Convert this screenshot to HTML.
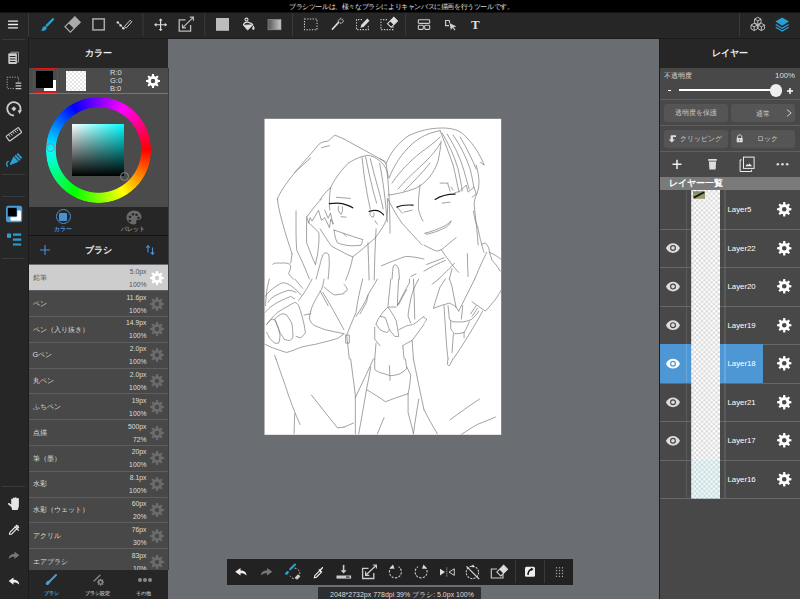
<!DOCTYPE html><html lang="ja"><head><meta charset="utf-8"><style>
*{margin:0;padding:0;box-sizing:border-box}
html,body{width:800px;height:599px;overflow:hidden;background:#6a6d71;font-family:"Liberation Sans",sans-serif;color:#fff}
.a{position:absolute}
.t{position:absolute;white-space:nowrap;line-height:1}
svg{overflow:visible}
</style></head><body>
<div class="a" style="left:0;top:0;width:800px;height:13px;background:#262626"></div><svg class="a" style="left:0;top:0" width="800" height="13"><rect x="0" y="0" width="800" height="12.5" fill="#000"/></svg>
<div class="t" style="left:289px;top:3.5px;font-size:6.5px;letter-spacing:-0.4px;color:#e0e0e0">ブラシツールは、様々なブラシによりキャンバスに描画を行うツールです。</div>
<div class="a" style="left:0;top:13px;width:800px;height:25px;background:#262626"></div>
<div class="a" style="left:0;top:38px;width:28px;height:561px;background:#262626"></div>
<div class="a" style="left:2px;top:39px;width:23px;height:1px;background:#3a3a3a"></div>
<div class="a" style="left:2px;top:174px;width:23px;height:1px;background:#3a3a3a"></div>
<div class="a" style="left:2px;top:196px;width:23px;height:1px;background:#3a3a3a"></div>
<div class="a" style="left:2px;top:258px;width:23px;height:1px;background:#3a3a3a"></div>
<div class="a" style="left:2px;top:486px;width:23px;height:1px;background:#3a3a3a"></div>
<div class="a" style="left:28px;top:38px;width:140px;height:30px;background:#262626"></div>
<div class="t" style="left:28px;width:140px;text-align:center;top:48.5px;font-size:9px;font-weight:bold;color:#eee">カラー</div>
<div class="a" style="left:28px;top:68px;width:140px;height:139px;background:#4b4b4b"></div>
<div class="a" style="left:28px;top:93px;width:140px;height:1px;background:#777"></div>
<div class="a" style="left:33px;top:68px;width:25px;height:25px;border:1.9px solid #e01818;border-radius:2.5px"></div>
<div class="a" style="left:44px;top:80px;width:12px;height:11px;background:#fff"></div>
<div class="a" style="left:36px;top:71px;width:17px;height:17px;background:#000"></div>
<div class="a" style="left:66px;top:71px;width:20px;height:20px;background-color:#fff;background-image:linear-gradient(45deg,#e4e4e4 25%,transparent 25%,transparent 75%,#e4e4e4 75%),linear-gradient(45deg,#e4e4e4 25%,transparent 25%,transparent 75%,#e4e4e4 75%);background-size:4px 4px;background-position:0 0,2px 2px"></div>
<div class="t" style="left:110px;top:69px;font-size:7.5px;color:#ddd">R:0</div>
<div class="t" style="left:110px;top:77px;font-size:7.5px;color:#ddd">G:0</div>
<div class="t" style="left:110px;top:85px;font-size:7.5px;color:#ddd">B:0</div>
<svg style="position:absolute;left:145.5px;top:73.5px" width="14" height="14"><path fill-rule="evenodd" fill="#fff" d="M11.90,5.82 L13.93,6.01 L13.93,7.99 L11.90,8.18 L11.30,9.63 L12.60,11.20 L11.20,12.60 L9.63,11.30 L8.18,11.90 L7.99,13.93 L6.01,13.93 L5.82,11.90 L4.37,11.30 L2.80,12.60 L1.40,11.20 L2.70,9.63 L2.10,8.18 L0.07,7.99 L0.07,6.01 L2.10,5.82 L2.70,4.37 L1.40,2.80 L2.80,1.40 L4.37,2.70 L5.82,2.10 L6.01,0.07 L7.99,0.07 L8.18,2.10 L9.63,2.70 L11.20,1.40 L12.60,2.80 L11.30,4.37Z M9.24,7.00 A2.24,2.24 0 1,0 4.76,7.00 A2.24,2.24 0 1,0 9.24,7.00Z"/></svg>
<div class="a" style="left:45.5px;top:97.2px;width:105.8px;height:105.8px;border-radius:50%;background:conic-gradient(from 90deg,#f00,#ff0,#0f0,#0ff,#00f,#f0f,#f00);-webkit-mask:radial-gradient(circle,transparent 42.3px,#000 43.2px);mask:radial-gradient(circle,transparent 42.3px,#000 43.2px)"></div>
<div class="a" style="left:72px;top:124px;width:52px;height:52px;background:linear-gradient(to bottom,transparent,#000),linear-gradient(to right,#fff,#0ff)"></div>
<div class="a" style="left:46.3px;top:143.4px;width:9px;height:9px;border-radius:50%;border:1.8px solid #8a8a8a"></div>
<div class="a" style="left:120px;top:172.3px;width:9px;height:9px;border-radius:50%;border:1.8px solid #8a8a8a"></div>
<div class="a" style="left:28px;top:207px;width:140px;height:28px;background:#262626"></div>
<div class="a" style="left:28px;top:235px;width:140px;height:1px;background:#141414"></div>
<div class="a" style="left:55.5px;top:209px;width:15px;height:15px;border-radius:50%;border:1.3px solid #4a90d0"></div>
<div class="a" style="left:59px;top:212.5px;width:8px;height:8px;background:#4a90d0;border-radius:1px"></div>
<div class="t" style="left:48px;width:30px;text-align:center;top:227px;font-size:5.8px;font-weight:bold;color:#4a90d0">カラー</div>
<div class="t" style="left:113px;width:40px;text-align:center;top:227px;font-size:5.6px;font-weight:bold;color:#888">パレット</div>
<svg class="a" style="left:125.5px;top:209.5px" width="16" height="15"><path fill="#6a6a6a" fill-rule="evenodd" d="M8,0.5 C12.5,0.5 15.5,3.5 15.5,7 C15.5,9.5 13.5,10 12,9.8 C10.5,9.6 9.8,10.6 10.3,12 C10.8,13.5 9.8,14.5 8,14.5 C4,14.5 0.5,11.5 0.5,7.5 C0.5,3.5 3.8,0.5 8,0.5Z M4,5.5a1.3,1.3 0 1,0 0.01,0Z M7,3a1.3,1.3 0 1,0 0.01,0Z M10.5,3.5a1.3,1.3 0 1,0 0.01,0Z M12.5,6.5a1.3,1.3 0 1,0 0.01,0Z M3.8,9.5a1.3,1.3 0 1,0 0.01,0Z"/></svg>
<div class="a" style="left:28px;top:236px;width:140px;height:28px;background:#262626"></div>
<div class="t" style="left:28px;width:140px;text-align:center;top:246px;font-size:9px;font-weight:bold;color:#eee">ブラシ</div>
<svg class="a" style="left:40px;top:245px" width="10" height="10"><path stroke="#4a90d0" stroke-width="1.1" d="M5,0V10M0,5H10"/></svg>
<svg class="a" style="left:145.5px;top:244.5px" width="9" height="10"><path stroke="#4a90d0" stroke-width="1.1" fill="none" d="M2,7.5V0.8M0.3,2.6L2,0.5L3.7,2.6M6.5,2.5V9.2M4.8,7.4L6.5,9.5L8.2,7.4"/></svg>
<div class="a" style="left:28px;top:264.8px;width:140px;height:25.8px;background:#cdcdcd"></div>
<div class="t" style="left:32.5px;top:274.0px;font-size:7.3px;color:#555">鉛筆</div>
<div class="t" style="left:100px;width:46.5px;text-align:right;top:268.8px;font-size:6.8px;color:#555">5.0px</div>
<div class="t" style="left:100px;width:46.5px;text-align:right;top:281.8px;font-size:6.8px;color:#555">100%</div>
<svg style="position:absolute;left:149.8px;top:270.8px" width="14" height="14"><path fill-rule="evenodd" fill="#fff" d="M11.90,5.82 L13.93,6.01 L13.93,7.99 L11.90,8.18 L11.30,9.63 L12.60,11.20 L11.20,12.60 L9.63,11.30 L8.18,11.90 L7.99,13.93 L6.01,13.93 L5.82,11.90 L4.37,11.30 L2.80,12.60 L1.40,11.20 L2.70,9.63 L2.10,8.18 L0.07,7.99 L0.07,6.01 L2.10,5.82 L2.70,4.37 L1.40,2.80 L2.80,1.40 L4.37,2.70 L5.82,2.10 L6.01,0.07 L7.99,0.07 L8.18,2.10 L9.63,2.70 L11.20,1.40 L12.60,2.80 L11.30,4.37Z M9.24,7.00 A2.24,2.24 0 1,0 4.76,7.00 A2.24,2.24 0 1,0 9.24,7.00Z"/></svg>
<div class="a" style="left:28px;top:290.6px;width:140px;height:25.8px;background:#484848"></div>
<div class="a" style="left:28px;top:290.1px;width:140px;height:1px;background:#5e5e5e"></div>
<div class="t" style="left:32.5px;top:299.8px;font-size:7.3px;color:#ddd">ペン</div>
<div class="t" style="left:100px;width:46.5px;text-align:right;top:294.6px;font-size:6.8px;color:#ddd">11.6px</div>
<div class="t" style="left:100px;width:46.5px;text-align:right;top:307.6px;font-size:6.8px;color:#ddd">100%</div>
<svg style="position:absolute;left:149.8px;top:296.6px" width="14" height="14"><path fill-rule="evenodd" fill="#6b6b6b" d="M11.90,5.82 L13.93,6.01 L13.93,7.99 L11.90,8.18 L11.30,9.63 L12.60,11.20 L11.20,12.60 L9.63,11.30 L8.18,11.90 L7.99,13.93 L6.01,13.93 L5.82,11.90 L4.37,11.30 L2.80,12.60 L1.40,11.20 L2.70,9.63 L2.10,8.18 L0.07,7.99 L0.07,6.01 L2.10,5.82 L2.70,4.37 L1.40,2.80 L2.80,1.40 L4.37,2.70 L5.82,2.10 L6.01,0.07 L7.99,0.07 L8.18,2.10 L9.63,2.70 L11.20,1.40 L12.60,2.80 L11.30,4.37Z M9.24,7.00 A2.24,2.24 0 1,0 4.76,7.00 A2.24,2.24 0 1,0 9.24,7.00Z"/></svg>
<div class="a" style="left:28px;top:316.4px;width:140px;height:25.8px;background:#484848"></div>
<div class="a" style="left:28px;top:315.9px;width:140px;height:1px;background:#5e5e5e"></div>
<div class="t" style="left:32.5px;top:325.6px;font-size:7.3px;color:#ddd">ペン（入り抜き）</div>
<div class="t" style="left:100px;width:46.5px;text-align:right;top:320.4px;font-size:6.8px;color:#ddd">14.9px</div>
<div class="t" style="left:100px;width:46.5px;text-align:right;top:333.4px;font-size:6.8px;color:#ddd">100%</div>
<svg style="position:absolute;left:149.8px;top:322.40000000000003px" width="14" height="14"><path fill-rule="evenodd" fill="#6b6b6b" d="M11.90,5.82 L13.93,6.01 L13.93,7.99 L11.90,8.18 L11.30,9.63 L12.60,11.20 L11.20,12.60 L9.63,11.30 L8.18,11.90 L7.99,13.93 L6.01,13.93 L5.82,11.90 L4.37,11.30 L2.80,12.60 L1.40,11.20 L2.70,9.63 L2.10,8.18 L0.07,7.99 L0.07,6.01 L2.10,5.82 L2.70,4.37 L1.40,2.80 L2.80,1.40 L4.37,2.70 L5.82,2.10 L6.01,0.07 L7.99,0.07 L8.18,2.10 L9.63,2.70 L11.20,1.40 L12.60,2.80 L11.30,4.37Z M9.24,7.00 A2.24,2.24 0 1,0 4.76,7.00 A2.24,2.24 0 1,0 9.24,7.00Z"/></svg>
<div class="a" style="left:28px;top:342.2px;width:140px;height:25.8px;background:#484848"></div>
<div class="a" style="left:28px;top:341.7px;width:140px;height:1px;background:#5e5e5e"></div>
<div class="t" style="left:32.5px;top:351.4px;font-size:7.3px;color:#ddd">Gペン</div>
<div class="t" style="left:100px;width:46.5px;text-align:right;top:346.2px;font-size:6.8px;color:#ddd">2.0px</div>
<div class="t" style="left:100px;width:46.5px;text-align:right;top:359.2px;font-size:6.8px;color:#ddd">100%</div>
<svg style="position:absolute;left:149.8px;top:348.20000000000005px" width="14" height="14"><path fill-rule="evenodd" fill="#6b6b6b" d="M11.90,5.82 L13.93,6.01 L13.93,7.99 L11.90,8.18 L11.30,9.63 L12.60,11.20 L11.20,12.60 L9.63,11.30 L8.18,11.90 L7.99,13.93 L6.01,13.93 L5.82,11.90 L4.37,11.30 L2.80,12.60 L1.40,11.20 L2.70,9.63 L2.10,8.18 L0.07,7.99 L0.07,6.01 L2.10,5.82 L2.70,4.37 L1.40,2.80 L2.80,1.40 L4.37,2.70 L5.82,2.10 L6.01,0.07 L7.99,0.07 L8.18,2.10 L9.63,2.70 L11.20,1.40 L12.60,2.80 L11.30,4.37Z M9.24,7.00 A2.24,2.24 0 1,0 4.76,7.00 A2.24,2.24 0 1,0 9.24,7.00Z"/></svg>
<div class="a" style="left:28px;top:368.0px;width:140px;height:25.8px;background:#484848"></div>
<div class="a" style="left:28px;top:367.5px;width:140px;height:1px;background:#5e5e5e"></div>
<div class="t" style="left:32.5px;top:377.2px;font-size:7.3px;color:#ddd">丸ペン</div>
<div class="t" style="left:100px;width:46.5px;text-align:right;top:372.0px;font-size:6.8px;color:#ddd">2.0px</div>
<div class="t" style="left:100px;width:46.5px;text-align:right;top:385.0px;font-size:6.8px;color:#ddd">100%</div>
<svg style="position:absolute;left:149.8px;top:374.0px" width="14" height="14"><path fill-rule="evenodd" fill="#6b6b6b" d="M11.90,5.82 L13.93,6.01 L13.93,7.99 L11.90,8.18 L11.30,9.63 L12.60,11.20 L11.20,12.60 L9.63,11.30 L8.18,11.90 L7.99,13.93 L6.01,13.93 L5.82,11.90 L4.37,11.30 L2.80,12.60 L1.40,11.20 L2.70,9.63 L2.10,8.18 L0.07,7.99 L0.07,6.01 L2.10,5.82 L2.70,4.37 L1.40,2.80 L2.80,1.40 L4.37,2.70 L5.82,2.10 L6.01,0.07 L7.99,0.07 L8.18,2.10 L9.63,2.70 L11.20,1.40 L12.60,2.80 L11.30,4.37Z M9.24,7.00 A2.24,2.24 0 1,0 4.76,7.00 A2.24,2.24 0 1,0 9.24,7.00Z"/></svg>
<div class="a" style="left:28px;top:393.8px;width:140px;height:25.8px;background:#484848"></div>
<div class="a" style="left:28px;top:393.3px;width:140px;height:1px;background:#5e5e5e"></div>
<div class="t" style="left:32.5px;top:403.0px;font-size:7.3px;color:#ddd">ふちペン</div>
<div class="t" style="left:100px;width:46.5px;text-align:right;top:397.8px;font-size:6.8px;color:#ddd">19px</div>
<div class="t" style="left:100px;width:46.5px;text-align:right;top:410.8px;font-size:6.8px;color:#ddd">100%</div>
<svg style="position:absolute;left:149.8px;top:399.8px" width="14" height="14"><path fill-rule="evenodd" fill="#6b6b6b" d="M11.90,5.82 L13.93,6.01 L13.93,7.99 L11.90,8.18 L11.30,9.63 L12.60,11.20 L11.20,12.60 L9.63,11.30 L8.18,11.90 L7.99,13.93 L6.01,13.93 L5.82,11.90 L4.37,11.30 L2.80,12.60 L1.40,11.20 L2.70,9.63 L2.10,8.18 L0.07,7.99 L0.07,6.01 L2.10,5.82 L2.70,4.37 L1.40,2.80 L2.80,1.40 L4.37,2.70 L5.82,2.10 L6.01,0.07 L7.99,0.07 L8.18,2.10 L9.63,2.70 L11.20,1.40 L12.60,2.80 L11.30,4.37Z M9.24,7.00 A2.24,2.24 0 1,0 4.76,7.00 A2.24,2.24 0 1,0 9.24,7.00Z"/></svg>
<div class="a" style="left:28px;top:419.6px;width:140px;height:25.8px;background:#484848"></div>
<div class="a" style="left:28px;top:419.1px;width:140px;height:1px;background:#5e5e5e"></div>
<div class="t" style="left:32.5px;top:428.8px;font-size:7.3px;color:#ddd">点描</div>
<div class="t" style="left:100px;width:46.5px;text-align:right;top:423.6px;font-size:6.8px;color:#ddd">500px</div>
<div class="t" style="left:100px;width:46.5px;text-align:right;top:436.6px;font-size:6.8px;color:#ddd">72%</div>
<svg style="position:absolute;left:149.8px;top:425.6px" width="14" height="14"><path fill-rule="evenodd" fill="#6b6b6b" d="M11.90,5.82 L13.93,6.01 L13.93,7.99 L11.90,8.18 L11.30,9.63 L12.60,11.20 L11.20,12.60 L9.63,11.30 L8.18,11.90 L7.99,13.93 L6.01,13.93 L5.82,11.90 L4.37,11.30 L2.80,12.60 L1.40,11.20 L2.70,9.63 L2.10,8.18 L0.07,7.99 L0.07,6.01 L2.10,5.82 L2.70,4.37 L1.40,2.80 L2.80,1.40 L4.37,2.70 L5.82,2.10 L6.01,0.07 L7.99,0.07 L8.18,2.10 L9.63,2.70 L11.20,1.40 L12.60,2.80 L11.30,4.37Z M9.24,7.00 A2.24,2.24 0 1,0 4.76,7.00 A2.24,2.24 0 1,0 9.24,7.00Z"/></svg>
<div class="a" style="left:28px;top:445.4px;width:140px;height:25.8px;background:#484848"></div>
<div class="a" style="left:28px;top:444.9px;width:140px;height:1px;background:#5e5e5e"></div>
<div class="t" style="left:32.5px;top:454.6px;font-size:7.3px;color:#ddd">筆（墨）</div>
<div class="t" style="left:100px;width:46.5px;text-align:right;top:449.4px;font-size:6.8px;color:#ddd">20px</div>
<div class="t" style="left:100px;width:46.5px;text-align:right;top:462.4px;font-size:6.8px;color:#ddd">100%</div>
<svg style="position:absolute;left:149.8px;top:451.4px" width="14" height="14"><path fill-rule="evenodd" fill="#6b6b6b" d="M11.90,5.82 L13.93,6.01 L13.93,7.99 L11.90,8.18 L11.30,9.63 L12.60,11.20 L11.20,12.60 L9.63,11.30 L8.18,11.90 L7.99,13.93 L6.01,13.93 L5.82,11.90 L4.37,11.30 L2.80,12.60 L1.40,11.20 L2.70,9.63 L2.10,8.18 L0.07,7.99 L0.07,6.01 L2.10,5.82 L2.70,4.37 L1.40,2.80 L2.80,1.40 L4.37,2.70 L5.82,2.10 L6.01,0.07 L7.99,0.07 L8.18,2.10 L9.63,2.70 L11.20,1.40 L12.60,2.80 L11.30,4.37Z M9.24,7.00 A2.24,2.24 0 1,0 4.76,7.00 A2.24,2.24 0 1,0 9.24,7.00Z"/></svg>
<div class="a" style="left:28px;top:471.2px;width:140px;height:25.8px;background:#484848"></div>
<div class="a" style="left:28px;top:470.7px;width:140px;height:1px;background:#5e5e5e"></div>
<div class="t" style="left:32.5px;top:480.4px;font-size:7.3px;color:#ddd">水彩</div>
<div class="t" style="left:100px;width:46.5px;text-align:right;top:475.2px;font-size:6.8px;color:#ddd">8.1px</div>
<div class="t" style="left:100px;width:46.5px;text-align:right;top:488.2px;font-size:6.8px;color:#ddd">100%</div>
<svg style="position:absolute;left:149.8px;top:477.20000000000005px" width="14" height="14"><path fill-rule="evenodd" fill="#6b6b6b" d="M11.90,5.82 L13.93,6.01 L13.93,7.99 L11.90,8.18 L11.30,9.63 L12.60,11.20 L11.20,12.60 L9.63,11.30 L8.18,11.90 L7.99,13.93 L6.01,13.93 L5.82,11.90 L4.37,11.30 L2.80,12.60 L1.40,11.20 L2.70,9.63 L2.10,8.18 L0.07,7.99 L0.07,6.01 L2.10,5.82 L2.70,4.37 L1.40,2.80 L2.80,1.40 L4.37,2.70 L5.82,2.10 L6.01,0.07 L7.99,0.07 L8.18,2.10 L9.63,2.70 L11.20,1.40 L12.60,2.80 L11.30,4.37Z M9.24,7.00 A2.24,2.24 0 1,0 4.76,7.00 A2.24,2.24 0 1,0 9.24,7.00Z"/></svg>
<div class="a" style="left:28px;top:497.0px;width:140px;height:25.8px;background:#484848"></div>
<div class="a" style="left:28px;top:496.5px;width:140px;height:1px;background:#5e5e5e"></div>
<div class="t" style="left:32.5px;top:506.2px;font-size:7.3px;color:#ddd">水彩（ウェット）</div>
<div class="t" style="left:100px;width:46.5px;text-align:right;top:501.0px;font-size:6.8px;color:#ddd">60px</div>
<div class="t" style="left:100px;width:46.5px;text-align:right;top:514.0px;font-size:6.8px;color:#ddd">20%</div>
<svg style="position:absolute;left:149.8px;top:503.0px" width="14" height="14"><path fill-rule="evenodd" fill="#6b6b6b" d="M11.90,5.82 L13.93,6.01 L13.93,7.99 L11.90,8.18 L11.30,9.63 L12.60,11.20 L11.20,12.60 L9.63,11.30 L8.18,11.90 L7.99,13.93 L6.01,13.93 L5.82,11.90 L4.37,11.30 L2.80,12.60 L1.40,11.20 L2.70,9.63 L2.10,8.18 L0.07,7.99 L0.07,6.01 L2.10,5.82 L2.70,4.37 L1.40,2.80 L2.80,1.40 L4.37,2.70 L5.82,2.10 L6.01,0.07 L7.99,0.07 L8.18,2.10 L9.63,2.70 L11.20,1.40 L12.60,2.80 L11.30,4.37Z M9.24,7.00 A2.24,2.24 0 1,0 4.76,7.00 A2.24,2.24 0 1,0 9.24,7.00Z"/></svg>
<div class="a" style="left:28px;top:522.8px;width:140px;height:25.8px;background:#484848"></div>
<div class="a" style="left:28px;top:522.3px;width:140px;height:1px;background:#5e5e5e"></div>
<div class="t" style="left:32.5px;top:532.0px;font-size:7.3px;color:#ddd">アクリル</div>
<div class="t" style="left:100px;width:46.5px;text-align:right;top:526.8px;font-size:6.8px;color:#ddd">76px</div>
<div class="t" style="left:100px;width:46.5px;text-align:right;top:539.8px;font-size:6.8px;color:#ddd">30%</div>
<svg style="position:absolute;left:149.8px;top:528.8px" width="14" height="14"><path fill-rule="evenodd" fill="#6b6b6b" d="M11.90,5.82 L13.93,6.01 L13.93,7.99 L11.90,8.18 L11.30,9.63 L12.60,11.20 L11.20,12.60 L9.63,11.30 L8.18,11.90 L7.99,13.93 L6.01,13.93 L5.82,11.90 L4.37,11.30 L2.80,12.60 L1.40,11.20 L2.70,9.63 L2.10,8.18 L0.07,7.99 L0.07,6.01 L2.10,5.82 L2.70,4.37 L1.40,2.80 L2.80,1.40 L4.37,2.70 L5.82,2.10 L6.01,0.07 L7.99,0.07 L8.18,2.10 L9.63,2.70 L11.20,1.40 L12.60,2.80 L11.30,4.37Z M9.24,7.00 A2.24,2.24 0 1,0 4.76,7.00 A2.24,2.24 0 1,0 9.24,7.00Z"/></svg>
<div class="a" style="left:28px;top:548.6px;width:140px;height:25.8px;background:#484848"></div>
<div class="a" style="left:28px;top:548.1px;width:140px;height:1px;background:#5e5e5e"></div>
<div class="t" style="left:32.5px;top:557.8px;font-size:7.3px;color:#ddd">エアブラシ</div>
<div class="t" style="left:100px;width:46.5px;text-align:right;top:552.6px;font-size:6.8px;color:#ddd">83px</div>
<div class="t" style="left:100px;width:46.5px;text-align:right;top:565.6px;font-size:6.8px;color:#ddd">10%</div>
<svg style="position:absolute;left:149.8px;top:554.6px" width="14" height="14"><path fill-rule="evenodd" fill="#6b6b6b" d="M11.90,5.82 L13.93,6.01 L13.93,7.99 L11.90,8.18 L11.30,9.63 L12.60,11.20 L11.20,12.60 L9.63,11.30 L8.18,11.90 L7.99,13.93 L6.01,13.93 L5.82,11.90 L4.37,11.30 L2.80,12.60 L1.40,11.20 L2.70,9.63 L2.10,8.18 L0.07,7.99 L0.07,6.01 L2.10,5.82 L2.70,4.37 L1.40,2.80 L2.80,1.40 L4.37,2.70 L5.82,2.10 L6.01,0.07 L7.99,0.07 L8.18,2.10 L9.63,2.70 L11.20,1.40 L12.60,2.80 L11.30,4.37Z M9.24,7.00 A2.24,2.24 0 1,0 4.76,7.00 A2.24,2.24 0 1,0 9.24,7.00Z"/></svg>
<div class="a" style="left:28px;top:569.7px;width:140px;height:29.3px;background:#262626"></div>
<div class="t" style="left:28px;width:31px;text-align:right;top:590.8px;font-size:5.4px;font-weight:bold;color:#4a9ad8">ブラシ</div>
<div class="t" style="left:84.6px;top:590.8px;font-size:5.4px;font-weight:bold;color:#aaa">ブラシ設定</div>
<div class="t" style="left:136.3px;top:590.8px;font-size:5.4px;font-weight:bold;color:#aaa">その他</div>
<svg class="a" style="left:0;top:0" width="800" height="599"><path d="M56,575L49.8,581.2" stroke="#4a9ad8" stroke-width="2" stroke-linecap="round"/><ellipse cx="48" cy="582.8" rx="2.6" ry="1.7" transform="rotate(-45 48 582.8)" fill="#4a9ad8"/><path d="M100,575.2L94,581" stroke="#888" stroke-width="1.3" stroke-linecap="round"/><path fill-rule="evenodd" fill="#888" d="M103.23,581.57 L104.16,581.69 L104.16,582.71 L103.23,582.83 L102.90,583.61 L103.48,584.36 L102.76,585.08 L102.01,584.50 L101.23,584.83 L101.11,585.76 L100.09,585.76 L99.97,584.83 L99.19,584.50 L98.44,585.08 L97.72,584.36 L98.30,583.61 L97.97,582.83 L97.04,582.71 L97.04,581.69 L97.97,581.57 L98.30,580.79 L97.72,580.04 L98.44,579.32 L99.19,579.90 L99.97,579.57 L100.09,578.64 L101.11,578.64 L101.23,579.57 L102.01,579.90 L102.76,579.32 L103.48,580.04 L102.90,580.79Z M101.80,582.20 A1.2,1.2 0 1,0 99.40,582.20 A1.2,1.2 0 1,0 101.80,582.20Z"/><circle cx="140" cy="579.9" r="2" fill="#888"/><circle cx="145" cy="579.9" r="2" fill="#888"/><circle cx="150" cy="579.9" r="2" fill="#888"/></svg>
<div class="a" style="left:660px;top:38px;width:140px;height:561px;background:#484848"></div>
<div class="a" style="left:660px;top:38px;width:140px;height:30px;background:#262626"></div>
<div class="t" style="left:660px;width:140px;text-align:center;top:48.5px;font-size:9px;font-weight:bold;color:#eee">レイヤー</div>
<div class="t" style="left:664.4px;top:72.5px;font-size:6.9px;color:#ddd">不透明度</div>
<div class="t" style="left:745px;width:50px;text-align:right;top:72px;font-size:7.8px;color:#ddd">100%</div>
<div class="a" style="left:668px;top:90px;width:3px;height:1.3px;background:#fff"></div>
<div class="a" style="left:679px;top:89.3px;width:97px;height:1.7px;background:#fff"></div>
<div class="a" style="left:769.9px;top:84.4px;width:12.2px;height:12.2px;border-radius:50%;background:#eceeef"></div>
<svg class="a" style="left:787.4px;top:87.9px" width="6" height="6"><path stroke="#fff" stroke-width="1.5" d="M3,0V6M0,3H6"/></svg>
<div class="a" style="left:660px;top:99px;width:140px;height:1px;background:#5f5f5f"></div>
<div class="a" style="left:660px;top:125px;width:140px;height:1px;background:#5f5f5f"></div>
<div class="a" style="left:660px;top:151px;width:140px;height:1px;background:#5f5f5f"></div>
<div class="a" style="left:664px;top:104px;width:64.4px;height:17.5px;background:#555;border-radius:3px"></div>
<div class="a" style="left:731px;top:104px;width:64.4px;height:17.5px;background:#555;border-radius:3px"></div>
<div class="a" style="left:664px;top:130px;width:64.4px;height:17.5px;background:#555;border-radius:3px"></div>
<div class="a" style="left:731px;top:130px;width:64.4px;height:17.5px;background:#555;border-radius:3px"></div>
<div class="t" style="left:664px;width:64.5px;text-align:center;top:109.5px;font-size:6.9px;color:#ccc">透明度を保護</div>
<div class="t" style="left:755.5px;top:109.5px;font-size:7px;color:#ccc">通常</div>
<div class="t" style="left:679.5px;top:135.5px;font-size:6.9px;color:#ccc">クリッピング</div>
<div class="t" style="left:757px;top:135.5px;font-size:6.9px;color:#ccc">ロック</div>
<svg class="a" style="left:0;top:0" width="800" height="599"><path d="M786.9,109.6L791.2,113L786.9,116.4" fill="none" stroke="#ccc" stroke-width="1"/><path d="M671.2,135.3H676V137H673V139.5H675L671.8,142.6L668.6,139.5H670.6V136Z" fill="#ddd"/><path d="M737.6,138.2V136.8C737.6,134.2 741.8,134.2 741.8,136.8V138.2" fill="none" stroke="#ddd" stroke-width="1"/><rect x="736.7" y="138" width="6" height="4.3" fill="#ddd"/><rect x="739.4" y="139.3" width="0.7" height="1.6" fill="#555"/><path d="M677,159.8V168.9M672.5,164.35H681.5" stroke="#eee" stroke-width="1.5"/><rect x="708.1" y="159.1" width="8.8" height="1.6" rx="0.5" fill="#ddd"/><path d="M708.9,161.4H716.1L715.6,169.6H709.4Z" fill="#ddd"/><path d="M741.8,159.9H740.1V171.5H751.6V169.7" fill="none" stroke="#eee" stroke-width="1"/><rect x="743.5" y="157.1" width="10.6" height="11.3" fill="none" stroke="#eee" stroke-width="1"/><path d="M745.3,166.3L747.2,164L748.2,165L749.5,163.5L752.2,166.3Z" fill="#eee"/><circle cx="777.8" cy="164.35" r="1.25" fill="#ddd"/><circle cx="782.5" cy="164.35" r="1.25" fill="#ddd"/><circle cx="787.2" cy="164.35" r="1.25" fill="#ddd"/></svg>
<div class="a" style="left:660px;top:177.3px;width:140px;height:12.7px;background:#7a7a7a"></div>
<div class="t" style="left:669px;top:178.5px;font-size:9.3px;font-weight:bold;color:#fff">レイヤー一覧</div>
<div class="a" style="left:685.5px;top:190px;width:1.5px;height:308.5px;background:#5a5a5a"></div>
<div class="a" style="left:724px;top:190px;width:1.5px;height:308.5px;background:#5a5a5a"></div>
<div class="a" style="left:660px;top:228.5px;width:140px;height:1px;background:#686868"></div>
<div class="t" style="left:727.5px;top:206.0px;font-size:7.8px;color:#fff">Layer5</div>
<svg style="position:absolute;left:776.85px;top:202.05px" width="14.5" height="14.5"><path fill-rule="evenodd" fill="#fff" d="M12.33,6.03 L14.43,6.23 L14.43,8.27 L12.33,8.47 L11.70,9.98 L13.05,11.60 L11.60,13.05 L9.98,11.70 L8.47,12.33 L8.27,14.43 L6.23,14.43 L6.03,12.33 L4.52,11.70 L2.90,13.05 L1.45,11.60 L2.80,9.98 L2.17,8.47 L0.07,8.27 L0.07,6.23 L2.17,6.03 L2.80,4.52 L1.45,2.90 L2.90,1.45 L4.52,2.80 L6.03,2.17 L6.23,0.07 L8.27,0.07 L8.47,2.17 L9.98,2.80 L11.60,1.45 L13.05,2.90 L11.70,4.52Z M9.57,7.25 A2.32,2.32 0 1,0 4.93,7.25 A2.32,2.32 0 1,0 9.57,7.25Z"/></svg>
<div class="a" style="left:660px;top:267.1px;width:140px;height:1px;background:#686868"></div>
<div class="t" style="left:727.5px;top:244.6px;font-size:7.8px;color:#fff">Layer22</div>
<svg style="position:absolute;left:776.85px;top:240.60000000000002px" width="14.5" height="14.5"><path fill-rule="evenodd" fill="#fff" d="M12.33,6.03 L14.43,6.23 L14.43,8.27 L12.33,8.47 L11.70,9.98 L13.05,11.60 L11.60,13.05 L9.98,11.70 L8.47,12.33 L8.27,14.43 L6.23,14.43 L6.03,12.33 L4.52,11.70 L2.90,13.05 L1.45,11.60 L2.80,9.98 L2.17,8.47 L0.07,8.27 L0.07,6.23 L2.17,6.03 L2.80,4.52 L1.45,2.90 L2.90,1.45 L4.52,2.80 L6.03,2.17 L6.23,0.07 L8.27,0.07 L8.47,2.17 L9.98,2.80 L11.60,1.45 L13.05,2.90 L11.70,4.52Z M9.57,7.25 A2.32,2.32 0 1,0 4.93,7.25 A2.32,2.32 0 1,0 9.57,7.25Z"/></svg>
<svg class="a" style="left:0;top:0" width="800" height="599"><path d="M665.9,248.05 C669,241.55 677,241.55 680,248.05 C677,254.55 669,254.55 665.9,248.05Z" fill="#ddd"/><circle cx="673" cy="248.05" r="3" fill="#484848"/><circle cx="673" cy="248.05" r="1.8" fill="#ddd"/></svg>
<div class="a" style="left:660px;top:305.6px;width:140px;height:1px;background:#686868"></div>
<div class="t" style="left:727.5px;top:283.1px;font-size:7.8px;color:#fff">Layer20</div>
<svg style="position:absolute;left:776.85px;top:279.15000000000003px" width="14.5" height="14.5"><path fill-rule="evenodd" fill="#fff" d="M12.33,6.03 L14.43,6.23 L14.43,8.27 L12.33,8.47 L11.70,9.98 L13.05,11.60 L11.60,13.05 L9.98,11.70 L8.47,12.33 L8.27,14.43 L6.23,14.43 L6.03,12.33 L4.52,11.70 L2.90,13.05 L1.45,11.60 L2.80,9.98 L2.17,8.47 L0.07,8.27 L0.07,6.23 L2.17,6.03 L2.80,4.52 L1.45,2.90 L2.90,1.45 L4.52,2.80 L6.03,2.17 L6.23,0.07 L8.27,0.07 L8.47,2.17 L9.98,2.80 L11.60,1.45 L13.05,2.90 L11.70,4.52Z M9.57,7.25 A2.32,2.32 0 1,0 4.93,7.25 A2.32,2.32 0 1,0 9.57,7.25Z"/></svg>
<svg class="a" style="left:0;top:0" width="800" height="599"><path d="M665.9,286.60 C669,280.10 677,280.10 680,286.60 C677,293.10 669,293.10 665.9,286.60Z" fill="#ddd"/><circle cx="673" cy="286.60" r="3" fill="#484848"/><circle cx="673" cy="286.60" r="1.8" fill="#ddd"/></svg>
<div class="a" style="left:660px;top:344.1px;width:140px;height:1px;background:#686868"></div>
<div class="t" style="left:727.5px;top:321.6px;font-size:7.8px;color:#fff">Layer19</div>
<svg style="position:absolute;left:776.85px;top:317.7px" width="14.5" height="14.5"><path fill-rule="evenodd" fill="#fff" d="M12.33,6.03 L14.43,6.23 L14.43,8.27 L12.33,8.47 L11.70,9.98 L13.05,11.60 L11.60,13.05 L9.98,11.70 L8.47,12.33 L8.27,14.43 L6.23,14.43 L6.03,12.33 L4.52,11.70 L2.90,13.05 L1.45,11.60 L2.80,9.98 L2.17,8.47 L0.07,8.27 L0.07,6.23 L2.17,6.03 L2.80,4.52 L1.45,2.90 L2.90,1.45 L4.52,2.80 L6.03,2.17 L6.23,0.07 L8.27,0.07 L8.47,2.17 L9.98,2.80 L11.60,1.45 L13.05,2.90 L11.70,4.52Z M9.57,7.25 A2.32,2.32 0 1,0 4.93,7.25 A2.32,2.32 0 1,0 9.57,7.25Z"/></svg>
<svg class="a" style="left:0;top:0" width="800" height="599"><path d="M665.9,325.15 C669,318.65 677,318.65 680,325.15 C677,331.65 669,331.65 665.9,325.15Z" fill="#ddd"/><circle cx="673" cy="325.15" r="3" fill="#484848"/><circle cx="673" cy="325.15" r="1.8" fill="#ddd"/></svg>
<div class="a" style="left:660px;top:344.2px;width:103.2px;height:38.5px;background:#4d97d4"></div>
<div class="a" style="left:685.5px;top:344.2px;width:1.5px;height:38.5px;background:#6aa6d8"></div>
<div class="a" style="left:724px;top:344.2px;width:1.5px;height:38.5px;background:#6aa6d8"></div>
<div class="a" style="left:660px;top:382.7px;width:140px;height:1px;background:#686868"></div>
<div class="t" style="left:727.5px;top:360.2px;font-size:7.8px;color:#fff">Layer18</div>
<svg style="position:absolute;left:776.85px;top:356.25px" width="14.5" height="14.5"><path fill-rule="evenodd" fill="#fff" d="M12.33,6.03 L14.43,6.23 L14.43,8.27 L12.33,8.47 L11.70,9.98 L13.05,11.60 L11.60,13.05 L9.98,11.70 L8.47,12.33 L8.27,14.43 L6.23,14.43 L6.03,12.33 L4.52,11.70 L2.90,13.05 L1.45,11.60 L2.80,9.98 L2.17,8.47 L0.07,8.27 L0.07,6.23 L2.17,6.03 L2.80,4.52 L1.45,2.90 L2.90,1.45 L4.52,2.80 L6.03,2.17 L6.23,0.07 L8.27,0.07 L8.47,2.17 L9.98,2.80 L11.60,1.45 L13.05,2.90 L11.70,4.52Z M9.57,7.25 A2.32,2.32 0 1,0 4.93,7.25 A2.32,2.32 0 1,0 9.57,7.25Z"/></svg>
<svg class="a" style="left:0;top:0" width="800" height="599"><path d="M665.9,363.70 C669,357.20 677,357.20 680,363.70 C677,370.20 669,370.20 665.9,363.70Z" fill="#fff"/><circle cx="673" cy="363.70" r="3" fill="#4d97d4"/><circle cx="673" cy="363.70" r="1.8" fill="#fff"/></svg>
<div class="a" style="left:660px;top:421.2px;width:140px;height:1px;background:#686868"></div>
<div class="t" style="left:727.5px;top:398.8px;font-size:7.8px;color:#fff">Layer21</div>
<svg style="position:absolute;left:776.85px;top:394.8px" width="14.5" height="14.5"><path fill-rule="evenodd" fill="#fff" d="M12.33,6.03 L14.43,6.23 L14.43,8.27 L12.33,8.47 L11.70,9.98 L13.05,11.60 L11.60,13.05 L9.98,11.70 L8.47,12.33 L8.27,14.43 L6.23,14.43 L6.03,12.33 L4.52,11.70 L2.90,13.05 L1.45,11.60 L2.80,9.98 L2.17,8.47 L0.07,8.27 L0.07,6.23 L2.17,6.03 L2.80,4.52 L1.45,2.90 L2.90,1.45 L4.52,2.80 L6.03,2.17 L6.23,0.07 L8.27,0.07 L8.47,2.17 L9.98,2.80 L11.60,1.45 L13.05,2.90 L11.70,4.52Z M9.57,7.25 A2.32,2.32 0 1,0 4.93,7.25 A2.32,2.32 0 1,0 9.57,7.25Z"/></svg>
<svg class="a" style="left:0;top:0" width="800" height="599"><path d="M665.9,402.25 C669,395.75 677,395.75 680,402.25 C677,408.75 669,408.75 665.9,402.25Z" fill="#ddd"/><circle cx="673" cy="402.25" r="3" fill="#484848"/><circle cx="673" cy="402.25" r="1.8" fill="#ddd"/></svg>
<div class="a" style="left:660px;top:459.8px;width:140px;height:1px;background:#686868"></div>
<div class="t" style="left:727.5px;top:437.3px;font-size:7.8px;color:#fff">Layer17</div>
<svg style="position:absolute;left:776.85px;top:433.34999999999997px" width="14.5" height="14.5"><path fill-rule="evenodd" fill="#fff" d="M12.33,6.03 L14.43,6.23 L14.43,8.27 L12.33,8.47 L11.70,9.98 L13.05,11.60 L11.60,13.05 L9.98,11.70 L8.47,12.33 L8.27,14.43 L6.23,14.43 L6.03,12.33 L4.52,11.70 L2.90,13.05 L1.45,11.60 L2.80,9.98 L2.17,8.47 L0.07,8.27 L0.07,6.23 L2.17,6.03 L2.80,4.52 L1.45,2.90 L2.90,1.45 L4.52,2.80 L6.03,2.17 L6.23,0.07 L8.27,0.07 L8.47,2.17 L9.98,2.80 L11.60,1.45 L13.05,2.90 L11.70,4.52Z M9.57,7.25 A2.32,2.32 0 1,0 4.93,7.25 A2.32,2.32 0 1,0 9.57,7.25Z"/></svg>
<svg class="a" style="left:0;top:0" width="800" height="599"><path d="M665.9,440.80 C669,434.30 677,434.30 680,440.80 C677,447.30 669,447.30 665.9,440.80Z" fill="#ddd"/><circle cx="673" cy="440.80" r="3" fill="#484848"/><circle cx="673" cy="440.80" r="1.8" fill="#ddd"/></svg>
<div class="a" style="left:660px;top:498.3px;width:140px;height:1px;background:#686868"></div>
<div class="t" style="left:727.5px;top:475.8px;font-size:7.8px;color:#fff">Layer16</div>
<svg style="position:absolute;left:776.85px;top:471.9px" width="14.5" height="14.5"><path fill-rule="evenodd" fill="#fff" d="M12.33,6.03 L14.43,6.23 L14.43,8.27 L12.33,8.47 L11.70,9.98 L13.05,11.60 L11.60,13.05 L9.98,11.70 L8.47,12.33 L8.27,14.43 L6.23,14.43 L6.03,12.33 L4.52,11.70 L2.90,13.05 L1.45,11.60 L2.80,9.98 L2.17,8.47 L0.07,8.27 L0.07,6.23 L2.17,6.03 L2.80,4.52 L1.45,2.90 L2.90,1.45 L4.52,2.80 L6.03,2.17 L6.23,0.07 L8.27,0.07 L8.47,2.17 L9.98,2.80 L11.60,1.45 L13.05,2.90 L11.70,4.52Z M9.57,7.25 A2.32,2.32 0 1,0 4.93,7.25 A2.32,2.32 0 1,0 9.57,7.25Z"/></svg>
<svg class="a" style="left:0;top:0" width="800" height="599"><defs><pattern id="ck" patternUnits="userSpaceOnUse" x="691.2" y="190" width="4.8" height="4.8"><rect width="4.8" height="4.8" fill="#fff"/><rect width="2.4" height="2.4" fill="#dadada"/><rect x="2.4" y="2.4" width="2.4" height="2.4" fill="#dadada"/></pattern></defs><rect x="691.2" y="190" width="28.8" height="308.6" fill="url(#ck)"/></svg>
<div class="a" style="left:691px;top:460px;width:29.2px;height:38.6px;background:rgba(120,230,240,0.12)"></div>
<svg class="a" style="left:0;top:0" width="800" height="599"><rect x="693" y="191.3" width="12" height="7.5" fill="#9c9a6c"/><rect x="693" y="191.3" width="12" height="2.5" fill="#6a8a6a" opacity="0.6"/><path d="M693.8,197.6L704.2,192.3" stroke="#151515" stroke-width="1.8"/></svg>
<div class="a" style="left:227px;top:559px;width:346px;height:26px;background:#222"></div>
<div class="a" style="left:318px;top:587px;width:163px;height:12px;background:#2d2e30;border-radius:1px 1px 0 0"></div>
<div class="t" style="left:330px;top:590.5px;font-size:7px;color:#ddd">2048*2732px 778dpi 39% ブラシ: 5.0px 100%</div>
<svg class="a" style="left:0;top:0" width="800" height="599"><rect x="264.5" y="118.8" width="236.7" height="316" fill="#fff"/></svg>
<div class="a" style="left:28px;top:38px;width:800px;height:1px;background:#1c1c1c"></div>
<div class="a" style="left:28px;top:38px;width:1px;height:561px;background:#1c1c1c"></div>
<div class="a" style="left:168px;top:68px;width:1px;height:502px;background:#3c3c3c"></div>
<div class="a" style="left:659px;top:38px;width:1px;height:561px;background:#1c1c1c"></div>
<svg class="a" style="left:0;top:0" width="800" height="599"><defs><clipPath id="cv"><rect x="264.5" y="118.8" width="236.7" height="316"/></clipPath></defs><g clip-path="url(#cv)"><g transform="translate(264,119) scale(0.133556)"><path d="M100,599 C120,550 150,500 240,390 C290,330 370,240 410,190 C430,170 460,168 480,165 L530,120 L599,150 M230,400 L350,290 M430,215 L490,200" fill="none" stroke="#7a7a7a" stroke-width="0.7" vector-effect="non-scaling-stroke" stroke-linecap="round" stroke-linejoin="round"/></g><g transform="translate(344,119) scale(0.133556)"><path d="M0,150 L310,320" fill="none" stroke="#7a7a7a" stroke-width="0.7" vector-effect="non-scaling-stroke" stroke-linecap="round" stroke-linejoin="round"/></g><g transform="translate(264,199) scale(0.133556)"><path d="M100,0 C105,60 130,150 150,220 C170,290 190,350 210,410 M65,490 C70,480 90,478 130,480 C160,478 190,478 200,500 C200,530 185,550 185,560 C195,575 210,590 220,599 M210,410 L200,480 M240,90 C240,200 238,300 245,380 C260,420 290,470 340,599 M320,135 L335,180 L345,140 L360,165 L408,85 L430,160 L455,140 L490,215 L500,150 L520,185 M320,135 C340,110 380,50 430,0 M330,175 C350,190 380,220 410,250 C415,290 410,350 400,420 L385,490 M320,140 C318,200 318,280 320,330 C340,380 360,440 385,490 M390,599 C410,530 425,460 440,420 C450,400 475,395 485,420 C492,460 488,530 480,599" fill="none" stroke="#7a7a7a" stroke-width="0.7" vector-effect="non-scaling-stroke" stroke-linecap="round" stroke-linejoin="round"/></g><g transform="translate(344,199) scale(0.133556)"><path d="M280,500 C340,475 400,450 460,430 C510,430 560,440 599,450 M360,599 C362,560 365,520 370,500 C380,488 400,490 410,530 L415,599 M500,580 L540,560" fill="none" stroke="#7a7a7a" stroke-width="0.7" vector-effect="non-scaling-stroke" stroke-linecap="round" stroke-linejoin="round"/></g><g transform="translate(424,199) scale(0.133556)"><path d="M0,345 C40,365 70,385 100,390 L130,380 C170,350 200,320 240,290 M130,380 C150,410 170,440 180,450 C200,480 230,520 260,550 M370,90 C380,150 390,190 400,200 C410,250 420,300 430,330 C440,370 445,390 450,400 M430,340 C440,335 450,330 460,330 C480,350 490,370 490,400 C500,430 510,460 510,460 C540,490 560,520 570,540 M490,400 C520,410 550,430 575,450 M470,400 C450,440 420,500 380,599 M325,410 C325,470 328,530 330,580 M20,490 C60,475 100,460 150,440 M0,540 C50,510 110,480 160,460 M110,599 C150,560 190,520 230,480 M190,599 L210,520" fill="none" stroke="#7a7a7a" stroke-width="0.7" vector-effect="non-scaling-stroke" stroke-linecap="round" stroke-linejoin="round"/></g><g transform="translate(264,279) scale(0.133556)"><path d="M40,0 C30,40 20,80 20,100 C15,150 12,180 10,200 M10,130 C30,100 60,70 130,30 C170,25 200,40 280,120 M30,175 C50,140 80,120 180,85 C210,85 230,95 240,100 M10,250 C40,210 80,180 200,130 L230,150 M260,160 C290,120 320,80 360,0 M350,240 C360,200 380,160 430,80 C440,50 445,30 450,0 M20,340 C40,310 70,280 100,250 C150,220 200,190 230,175 C245,180 255,190 260,200 C280,260 300,320 310,400 C300,420 285,435 270,440 L240,430 M80,300 C100,280 120,265 140,260 C155,262 165,265 170,270 C190,300 205,320 210,340 C215,380 218,420 215,440 C205,455 195,460 190,460 C170,458 160,455 150,450 C135,420 125,410 120,400 C105,360 90,330 80,300 M20,340 C35,320 50,305 60,300 C75,305 85,310 90,320 C105,360 115,390 120,420 C118,450 115,470 110,480 C100,482 90,482 80,480 C60,465 50,450 40,440 C30,420 25,410 20,400 M10,490 C40,505 60,515 80,520 C120,535 150,545 170,550 C210,540 250,520 280,510 C320,500 350,495 380,490 C420,480 440,475 460,470 C500,460 540,450 560,440 L599,410 M350,240 C345,260 340,280 340,300 C350,320 360,340 380,350 C420,365 440,375 460,380 C500,390 560,400 599,410 M440,100 C490,180 550,290 599,380 M420,90 L480,200 M300,270 L350,260 M230,0 L290,70 M450,60 C480,90 510,110 530,120 L599,110 M80,570 L90,599" fill="none" stroke="#7a7a7a" stroke-width="0.7" vector-effect="non-scaling-stroke" stroke-linecap="round" stroke-linejoin="round"/></g><g transform="translate(344,279) scale(0.133556)"><path d="M140,0 C120,80 100,170 90,250 C60,320 40,370 20,420 L40,599 M15,420 L40,420 L40,480 L15,480 Z M250,0 C230,40 200,80 180,120 C160,180 120,230 90,280 M180,120 C175,150 170,160 170,170 C150,210 130,240 120,260 M330,200 C335,130 345,60 350,0 M400,200 C402,130 405,60 410,0 M400,200 C430,140 470,60 490,30 L490,0 M410,190 C430,150 450,110 470,80 M560,0 C530,50 510,100 500,150 C490,200 480,250 480,280 L500,330 M520,0 C525,100 528,200 530,300 M270,280 C290,250 310,225 330,210 L390,210 M240,340 C250,310 260,290 270,280 C285,282 300,285 310,290 C320,320 330,350 340,380 C335,390 325,398 320,400 C300,395 285,390 270,380 L240,340 M330,210 C350,240 370,270 390,310 C400,360 405,400 410,430 L380,430 L340,380 M410,380 C440,365 460,355 470,350 C500,345 520,340 520,340 C550,320 570,300 599,280 M440,500 C470,480 490,470 510,460 C540,420 570,380 599,340 M230,360 C230,400 230,430 230,450 L270,500 M240,480 L230,599 M440,500 L450,599 M510,460 L520,599 M0,40 C20,60 30,80 20,90 L0,100" fill="none" stroke="#7a7a7a" stroke-width="0.7" vector-effect="non-scaling-stroke" stroke-linecap="round" stroke-linejoin="round"/></g><g transform="translate(424,279) scale(0.133556)"><path d="M160,0 C140,30 130,50 120,60 C100,120 85,170 70,220 C110,205 150,190 190,180 C210,190 230,200 240,210 L260,240 M190,0 C200,20 205,40 210,60 C220,110 230,160 240,210 M380,0 C340,80 300,160 260,240 M360,170 C400,200 430,220 460,240 C490,210 510,180 530,160 C550,130 570,100 580,80 M290,200 L280,300 M150,200 C152,250 155,300 160,350 C165,450 170,520 180,599 M180,200 C185,250 188,280 190,300 C200,310 210,318 220,320 C250,322 280,322 300,320 C330,315 350,305 360,300 C380,280 400,260 410,240 M200,310 C200,340 200,360 200,370 C210,390 220,400 230,410 C260,410 280,405 300,400 C320,370 330,340 340,320 M440,240 C380,350 300,480 220,599 M390,200 L350,260 M400,220 L360,280 M300,400 L300,440 M220,410 L210,550 M60,40 L110,0 M0,290 C10,292 15,296 20,300 C15,315 8,325 0,330" fill="none" stroke="#7a7a7a" stroke-width="0.7" vector-effect="non-scaling-stroke" stroke-linecap="round" stroke-linejoin="round"/></g><g transform="translate(264,359) scale(0.133556)"><path d="M90,0 C110,60 135,130 160,200 C190,300 230,400 270,490 M230,410 C228,460 226,510 225,560 M355,270 C420,350 480,430 550,515 L599,510" fill="none" stroke="#7a7a7a" stroke-width="0.7" vector-effect="non-scaling-stroke" stroke-linecap="round" stroke-linejoin="round"/></g><g transform="translate(344,359) scale(0.133556)"><path d="M50,0 C60,90 75,180 85,270 L85,560 M220,0 C180,90 130,190 85,290 M230,0 L230,80 C250,95 275,105 300,110 C320,118 335,122 350,125 C380,122 400,118 420,110 C440,100 455,85 470,70 L460,0 M340,50 L345,160 M200,60 C190,120 180,170 170,220 C150,340 130,450 110,560 M170,230 C220,260 270,290 310,320 C360,300 420,280 480,260 C490,220 495,170 500,120 L470,60 M480,260 C480,300 480,350 480,400 C495,460 510,510 520,560 M520,0 C545,120 570,250 599,380 M560,300 C545,390 530,480 520,560 M300,440 L250,560 M0,510 L70,480" fill="none" stroke="#7a7a7a" stroke-width="0.7" vector-effect="non-scaling-stroke" stroke-linecap="round" stroke-linejoin="round"/></g><g transform="translate(424,359) scale(0.133556)"><path d="M180,0 C176,15 175,30 175,40 C180,48 185,50 190,50 C200,35 210,15 215,0 M0,380 C30,440 70,510 100,560 M195,455 C270,400 340,350 415,300 M280,565 C320,540 360,510 400,490 C450,470 500,450 535,435" fill="none" stroke="#7a7a7a" stroke-width="0.7" vector-effect="non-scaling-stroke" stroke-linecap="round" stroke-linejoin="round"/></g><g transform="translate(380,125) scale(0.200334)"><path d="M30,195 C50,140 90,90 140,55 C190,30 250,15 310,15 C360,15 400,25 430,60 C470,100 500,150 520,200 L500,185 M45,265 C70,200 110,140 160,95 C200,60 240,40 300,28 M60,290 C100,230 150,180 200,140 C240,110 270,90 300,60 M90,320 C140,260 190,220 230,180 C260,150 285,120 302,90 M40,350 C80,345 130,335 180,315 C230,290 270,240 290,180 C298,140 303,110 305,80 M120,330 C160,290 210,240 250,190 M300,28 C320,80 345,140 365,200 C378,250 385,300 395,335 M310,40 C340,90 370,150 390,220 C400,270 408,300 410,330 M335,45 C370,100 400,160 420,230 C430,270 440,300 445,320 M365,50 C400,100 430,160 450,220 C460,260 465,290 468,310 M400,60 C430,110 460,170 480,220 M370,340 L400,330 L430,300 L440,335 L470,310 L480,345 L460,360 M480,200 C495,250 500,300 485,340 C475,360 470,380 470,400 C478,470 485,530 490,599 M300,290 L340,290 M338,292 L350,330 M355,310 L365,325 M200,300 C195,340 190,380 192,420 C198,445 205,465 215,480 M225,540 C250,535 290,520 320,505 C335,497 348,488 355,478 C350,495 340,505 320,515 C290,530 260,540 235,545 Z M40,370 C55,400 75,440 110,490 C140,525 175,560 210,599 M85,410 L112,440 M120,435 L160,425 M310,390 L350,385 M0,170 C15,175 28,185 32,200 C38,250 42,310 45,350 C48,420 50,480 50,540" fill="none" stroke="#7a7a7a" stroke-width="0.7" vector-effect="non-scaling-stroke" stroke-linecap="round" stroke-linejoin="round"/></g><g transform="translate(380,125) scale(0.200334)"><path d="M85,410 C100,402 130,398 165,400 M275,372 C300,355 330,345 375,345" fill="none" stroke="#1a1a1a" stroke-width="1.2" vector-effect="non-scaling-stroke" stroke-linecap="round" stroke-linejoin="round"/></g><g transform="translate(320,140) scale(0.233800)"><path d="M0,255 C15,235 30,215 45,205 M45,205 C60,170 90,130 120,100 C150,80 180,68 205,66 C230,68 255,85 275,110 C285,125 290,140 292,160 M180,75 C185,120 190,170 200,220 C205,250 212,280 215,295 M195,72 C205,120 215,170 228,220 C235,245 240,260 242,270 M215,80 C228,130 240,180 255,230 C262,260 268,280 270,295 M255,100 C265,150 272,200 278,250 C282,290 286,330 288,350 M45,205 C40,240 38,270 42,300 M20,300 L35,335 L45,312 L55,360 M70,245 L130,250 M80,282 C76,292 77,305 90,318 C97,308 98,295 95,285 M90,328 L112,330 M215,310 C211,318 213,326 228,330 C232,322 232,316 230,312 M235,345 L245,360 M60,385 C90,395 130,410 180,425 M60,385 C62,405 66,425 75,440 C100,450 130,456 175,450 C180,440 182,432 183,425 M100,400 L112,412 M0,380 C20,410 35,435 50,455 C80,470 110,488 140,500 C165,480 190,460 235,420 C255,395 275,365 285,340 C290,310 290,280 288,250 M140,500 C135,530 125,565 110,599 M205,440 C207,500 209,550 210,599 M240,380 C236,450 233,530 232,599" fill="none" stroke="#7a7a7a" stroke-width="0.7" vector-effect="non-scaling-stroke" stroke-linecap="round" stroke-linejoin="round"/></g><g transform="translate(320,140) scale(0.233800)"><path d="M40,272 C60,270 80,268 95,272 C115,277 130,283 140,290 M210,305 C225,301 245,300 255,306 C263,311 268,315 272,320" fill="none" stroke="#1a1a1a" stroke-width="1.2" vector-effect="non-scaling-stroke" stroke-linecap="round" stroke-linejoin="round"/></g></g></svg>
<svg class="a" style="left:0;top:0" width="800" height="599"><rect x="28.0" y="13" width="1" height="23" fill="#3a3a3a"/><rect x="142.5" y="13" width="1" height="23" fill="#3a3a3a"/><rect x="204.2" y="13" width="1" height="23" fill="#3a3a3a"/><rect x="292.0" y="13" width="1" height="23" fill="#3a3a3a"/><rect x="405.1" y="13" width="1" height="23" fill="#3a3a3a"/><rect x="739.0" y="13" width="1" height="23" fill="#3a3a3a"/><path d="M8.5,21.2H17.5M8.5,24.5H17.5M8.5,27.8H17.5" stroke="#eee" stroke-width="1.3" stroke-linecap="round"/><path d="M53,19.2L46.8,25.6" stroke="#2a9fd6" stroke-width="2.3" stroke-linecap="round"/><path d="M45.6,26.3 C44,26 42.3,27.2 42.2,28.8 C42.1,29.8 41.3,30.4 40.6,30.6 C42.5,31.2 45.3,30.8 46.3,29.2 C46.9,28.2 46.6,27 45.6,26.3Z" fill="#2a9fd6"/><g transform="translate(72.6,24.4) rotate(-45)"><rect x="-7" y="-3.8" width="14" height="7.6" fill="none" stroke="#aaa" stroke-width="1.2"/><rect x="-2" y="-3.8" width="9" height="7.6" fill="#aaa"/></g><rect x="92.9" y="18.9" width="11.4" height="11" fill="none" stroke="#aaa" stroke-width="1.5"/><circle cx="117.8" cy="22.4" r="1.2" fill="#ddd"/><circle cx="120.6" cy="25.4" r="1.2" fill="#ddd"/><circle cx="123.4" cy="28.2" r="1.2" fill="#ddd"/><path d="M117.8,22.4L123.4,28.2" stroke="#ddd" stroke-width="0.8"/><path d="M124.5,26.5L130.2,20.2L131.8,21.8L126.2,28Z" fill="none" stroke="#ccc" stroke-width="1"/><path d="M160.6,19V30.5M154.8,24.75H166.4" stroke="#ddd" stroke-width="1.2"/><path d="M158.6,20.6L160.6,18.4L162.6,20.6ZM158.6,28.9L160.6,31.1L162.6,28.9ZM156.4,22.75L154.2,24.75L156.4,26.75ZM164.8,22.75L167,24.75L164.8,26.75Z" fill="#ddd"/><path d="M185.5,19.8H179.2V31.2H190.6V25" fill="none" stroke="#bbb" stroke-width="1.3"/><path d="M182.8,27.6L193.2,17.4M182.5,24.5V27.9H186M189.8,17.2H193.4V20.8" fill="none" stroke="#bbb" stroke-width="1.2"/><rect x="216" y="18" width="13" height="12.8" fill="#bcbcbc"/><path d="M243.4,25.2 L253,24.8 L247.6,30.1 Z" fill="#ddd" stroke="#ddd" stroke-width="0.8" stroke-linejoin="round"/><path d="M243.4,25.2 C243.8,22.6 246,21.7 248.5,22.3 C250.8,22.8 252.4,23.6 253,24.8" fill="none" stroke="#ddd" stroke-width="1.3"/><circle cx="246.5" cy="19.6" r="1.5" fill="none" stroke="#ddd" stroke-width="1.1"/><path d="M253.4,25.6 C254.4,27 254.9,28.3 254.4,29.3 C253.9,30 252.6,30 252.3,29.2 C252,28.3 252.6,27 253.4,25.6Z" fill="#ddd"/><defs><linearGradient id="gr" x1="0" x2="1"><stop offset="0" stop-color="#555"/><stop offset="1" stop-color="#c8c8c8"/></linearGradient></defs><rect x="268" y="19.5" width="13" height="10.3" fill="url(#gr)" stroke="#999" stroke-width="0.6"/><rect x="304.5" y="19" width="12.5" height="10.7" fill="none" stroke="#ccc" stroke-width="1.1" stroke-dasharray="1.3,1.4"/><path d="M332.5,29L338.5,22.5" stroke="#ddd" stroke-width="1.8" stroke-linecap="round"/><path d="M340.8,17.8V19.5M340.8,22.3V24M337.6,21H339.3M342.3,21H344M338.7,18.9L339.6,19.8M342,22.2L342.9,23.1M342.9,18.9L342,19.8" stroke="#ddd" stroke-width="0.9"/><path d="M362,19.6H356.5V29.6H368.3V24.5" fill="none" stroke="#ccc" stroke-width="1.1" stroke-dasharray="1.3,1.4"/><path d="M360.5,27.8L361.3,24.8L367.3,18.6L369.5,20.8L363.5,27Z" fill="#ddd"/><path d="M387,19.6H381V29.6H393V24.5" fill="none" stroke="#ccc" stroke-width="1.1" stroke-dasharray="1.3,1.4"/><g transform="translate(392.5,22.3) rotate(-45)"><rect x="-4.5" y="-2.6" width="9" height="5.2" fill="#222" stroke="#ddd" stroke-width="1"/><rect x="-1" y="-2.6" width="5.5" height="5.2" fill="#ddd"/></g><rect x="418.3" y="19.8" width="11.4" height="3.6" rx="0.8" fill="none" stroke="#ccc" stroke-width="1.1"/><rect x="418.3" y="25.2" width="5" height="4.2" rx="0.8" fill="none" stroke="#ccc" stroke-width="1.1"/><rect x="424.7" y="25.2" width="5" height="4.2" rx="0.8" fill="none" stroke="#ccc" stroke-width="1.1"/><path d="M449.5,20.5H445.6V25.6H449" fill="none" stroke="#ccc" stroke-width="1.2"/><path d="M449.5,20.5V23" stroke="#ccc" stroke-width="1.2"/><path d="M449.5,23L456.5,26.5L453.5,27.2L455.5,29.8L454.5,30.4L452.6,27.8L450.8,30Z" fill="#ccc"/><text x="475.3" y="29" font-family="Liberation Serif" font-weight="bold" font-size="13" fill="#ddd" text-anchor="middle">T</text><g fill="none" stroke="#ccc" stroke-width="0.9"><path d="M757.8,17.3 L761.0,19.1 V22.8 L757.8,24.6 L754.5999999999999,22.8 V19.1Z M754.5999999999999,19.1 L757.8,20.8 L761.0,19.1 M757.8,20.8 V24.6"/><path d="M754.2,23.3 L757.4000000000001,25.1 V28.8 L754.2,30.6 L751.0,28.8 V25.1Z M751.0,25.1 L754.2,26.8 L757.4000000000001,25.1 M754.2,26.8 V30.6"/><path d="M761.4,23.3 L764.6,25.1 V28.8 L761.4,30.6 L758.1999999999999,28.8 V25.1Z M758.1999999999999,25.1 L761.4,26.8 L764.6,25.1 M761.4,26.8 V30.6"/></g><path d="M782.2,17.5L789,21.6L782.2,25.7L775.4,21.6Z" fill="#2a9fd6"/><path d="M775.8,24.5L782.2,28.3L788.6,24.5M775.8,27.2L782.2,31L788.6,27.2" fill="none" stroke="#2a9fd6" stroke-width="1.3"/><path d="M10.5,52.2H18.5V62H17" fill="none" stroke="#999" stroke-width="1"/><rect x="8.3" y="53.3" width="8.6" height="10.7" rx="1" fill="#ccc"/><path d="M9.8,56.5H15.5M9.8,59H15.5M9.8,61.5H15.5" stroke="#262626" stroke-width="1"/><rect x="7.2" y="77.2" width="11.4" height="11.4" fill="none" stroke="#bbb" stroke-width="0.9" stroke-dasharray="1.1,1.4"/><rect x="14.6" y="81.8" width="8" height="8" fill="#262626"/><path d="M15.6,83.1H21.3M15.6,85.9H21.3M15.6,88.7H21.3" stroke="#ccc" stroke-width="1.2"/><path d="M13.9,115.5 A6.7,6.7 0 1,1 20.2,111.1" fill="none" stroke="#ccc" stroke-width="1.8"/><path d="M17.6,110.4L22,110L19.6,114Z" fill="#ccc"/><path d="M13.9,106.3L16.4,108.8L13.9,111.3L11.4,108.8Z" fill="#ccc"/><g transform="translate(13.9,134.3) rotate(-36)"><rect x="-7.6" y="-3" width="15.2" height="6" rx="0.8" fill="none" stroke="#ccc" stroke-width="1.2"/><path d="M-4.5,-2.4V-0.3M-2,-2.4V0.2M0.5,-2.4V-0.3M3,-2.4V0.2M5.2,-2.4V-0.3" stroke="#ccc" stroke-width="0.9"/></g><g transform="translate(10.2,164.6) rotate(-43)" fill="#2a9fd6"><path d="M0,-0.7L8.2,-3.6L8.2,3.6L0,0.7Z"/><rect x="9" y="-3.4" width="1.9" height="6.8"/><rect x="11.7" y="-3.2" width="1.9" height="6.4"/></g><path d="M8.6,161.2C6.4,162.3 5.9,165 7.8,166.6" fill="none" stroke="#2a9fd6" stroke-width="1.4"/><rect x="6" y="205.8" width="16.2" height="16.4" rx="2.2" fill="#4a9ad8"/><rect x="10.5" y="210.5" width="10.5" height="10.3" rx="1" fill="#fff"/><rect x="7.5" y="207.5" width="9.5" height="9.3" rx="1" fill="#000" stroke="#4a9ad8" stroke-width="0.6"/><rect x="7" y="233.5" width="4" height="4.3" fill="#2a9fd6"/><path d="M13,234.7H21.2M13,239.7H21.2M13,244.5H21.2" stroke="#2a9fd6" stroke-width="2.2"/><path d="M12.2,510 L11.4,507 L8.3,504.4 C7.5,503.7 8.2,502.6 9.1,503.1 L11.2,504.4 V499.3 C11.2,498.3 12.9,498.3 12.9,499.3 V502.6 V498.3 C12.9,497.3 14.8,497.3 14.8,498.3 V502.6 V497.9 C14.8,496.9 16.7,496.9 16.7,497.9 V502.6 V498.8 C16.7,497.8 18.9,497.8 18.9,498.8 V505 C18.9,507.2 18.2,508.6 17.6,510 Z" fill="#e6e6e6"/><path d="M9.4,534.2 L9.9,532.4 L15.3,527 L17,528.7 L11.6,534.1 Z" fill="none" stroke="#eee" stroke-width="1.1" stroke-linejoin="round"/><path d="M15.4,525.8 L16.6,524.6 L17.5,525.5 L18,525.2 L18.8,526 L18.5,526.5 L19.4,527.4 L18.2,528.6 Z" fill="#eee"/><path d="M14.6,526.4L18.8,530.6" stroke="#eee" stroke-width="1.2"/><path d="M8.8,558.8 C8.8,555.5 11,553.9 14.5,553.9 V551.6 L19.3,555.3 L14.5,559 V556.7 C11.8,556.7 10.2,557.3 8.8,558.8Z" fill="#777"/><path d="M19.2,584.6 C19.2,581.3 17,579.7 13.5,579.7 V577.4 L8.7,581.1 L13.5,584.8 V582.5 C16.2,582.5 17.8,583.1 19.2,584.6Z" fill="#eee"/><path d="M246.5,575.5 C246.5,572 244.2,570.5 240.5,570.5 V568 L235.2,571.8 L240.5,575.6 V573.2 C243.3,573.2 245,573.8 246.5,575.5Z" fill="#eee"/><path d="M261,575.5 C261,572 263.3,570.5 267,570.5 V568 L272.3,571.8 L267,575.6 V573.2 C264.2,573.2 262.5,573.8 261,575.5Z" fill="#777"/><path d="M295,564.5L290.2,569.3" stroke="#2a9fd6" stroke-width="2.1" stroke-linecap="round"/><ellipse cx="287" cy="572.9" rx="2.2" ry="1.4" transform="rotate(-45 287 572.9)" fill="#2a9fd6"/><path d="M294.6,568.2 A5.2,5.2 0 1,1 290,575.8" fill="none" stroke="#ccc" stroke-width="1" stroke-dasharray="1.8,1.6"/><g transform="translate(297.6,577) rotate(-45)"><rect x="-2.3" y="-1.6" width="4.6" height="3.2" fill="#ccc"/></g><path d="M314.8,575.6L320,570.4L321.6,572L316.4,577.2L314.4,577.8Z" fill="none" stroke="#eee" stroke-width="1.1"/><path d="M319.8,569.4L322,567.3C322.6,566.7 323.5,567.6 322.9,568.2L320.8,570.4L321.8,571.4L320.9,572.3L318.4,569.8L319.3,568.9Z" fill="#eee"/><path d="M343.6,564.9V571.5" stroke="#ccc" stroke-width="1.6"/><path d="M340.6,570.2L343.6,573.6L346.6,570.2Z" fill="#ccc"/><rect x="336.5" y="575.5" width="14.6" height="3.1" fill="#ccc"/><rect x="346" y="576.4" width="3.5" height="1.3" fill="#333"/><path d="M368.5,568.3H362.6V578.5H373.8V573" fill="none" stroke="#ccc" stroke-width="1.3"/><path d="M366,575L376.2,565.2M365.6,571.6V575.3H369.3M372.8,565H376.4V568.6" fill="none" stroke="#ccc" stroke-width="1.2"/><path d="M391.6,567.2 A6,6 0 1,0 398.6,566.8" fill="none" stroke="#ccc" stroke-width="1.1" stroke-dasharray="2.2,1.3"/><path d="M389.5,568.5L393,564.5L394.5,568.8Z" fill="#ddd"/><path d="M424.9,567.2 A6,6 0 1,1 417.9,566.8" fill="none" stroke="#ccc" stroke-width="1.1" stroke-dasharray="2.2,1.3"/><path d="M427,568.5L423.5,564.5L422,568.8Z" fill="#ddd"/><path d="M440,568.8V575.4L445,572.1Z" fill="#ddd"/><path d="M454.3,568.8V575.4L449,572.1Z" fill="none" stroke="#ccc" stroke-width="1"/><path d="M446.8,567.5V577" stroke="#ccc" stroke-width="0.8" stroke-dasharray="1,0.8"/><circle cx="472.4" cy="572.4" r="6.2" fill="none" stroke="#ccc" stroke-width="1.1" stroke-dasharray="2,1.2"/><path d="M466.5,566.3L479.2,579.2" stroke="#ddd" stroke-width="1.2"/><path d="M470.5,566.5L473.5,564.5L474,567.5Z" fill="#ddd"/><path d="M497,569H491.3V578H503V573.5" fill="none" stroke="#ccc" stroke-width="1.1"/><g transform="translate(502.2,570.6) rotate(-45)"><rect x="-4.8" y="-2.8" width="9.6" height="5.6" fill="#222" stroke="#ddd" stroke-width="1"/><rect x="-1.2" y="-2.8" width="6" height="5.6" fill="#ddd"/></g><rect x="515" y="560.5" width="1" height="22.5" fill="#3a3a3a"/><rect x="544" y="560.5" width="1" height="22.5" fill="#3a3a3a"/><rect x="525" y="566.8" width="10" height="10" rx="1.5" fill="#eee"/><path d="M528,575C528,571.5 529.5,569.5 532.3,569.2" fill="none" stroke="#111" stroke-width="1.5"/><path d="M530.8,567.8L533.5,569.1L531.3,571Z" fill="#111"/><rect x="555.9" y="567.1999999999999" width="1.2" height="1.2" fill="#aaa"/><rect x="555.9" y="570.1" width="1.2" height="1.2" fill="#aaa"/><rect x="555.9" y="572.9" width="1.2" height="1.2" fill="#aaa"/><rect x="555.9" y="575.8" width="1.2" height="1.2" fill="#aaa"/><rect x="558.9" y="567.1999999999999" width="1.2" height="1.2" fill="#aaa"/><rect x="558.9" y="570.1" width="1.2" height="1.2" fill="#aaa"/><rect x="558.9" y="572.9" width="1.2" height="1.2" fill="#aaa"/><rect x="558.9" y="575.8" width="1.2" height="1.2" fill="#aaa"/><rect x="561.9" y="567.1999999999999" width="1.2" height="1.2" fill="#aaa"/><rect x="561.9" y="570.1" width="1.2" height="1.2" fill="#aaa"/><rect x="561.9" y="572.9" width="1.2" height="1.2" fill="#aaa"/><rect x="561.9" y="575.8" width="1.2" height="1.2" fill="#aaa"/></svg>
</body></html>
